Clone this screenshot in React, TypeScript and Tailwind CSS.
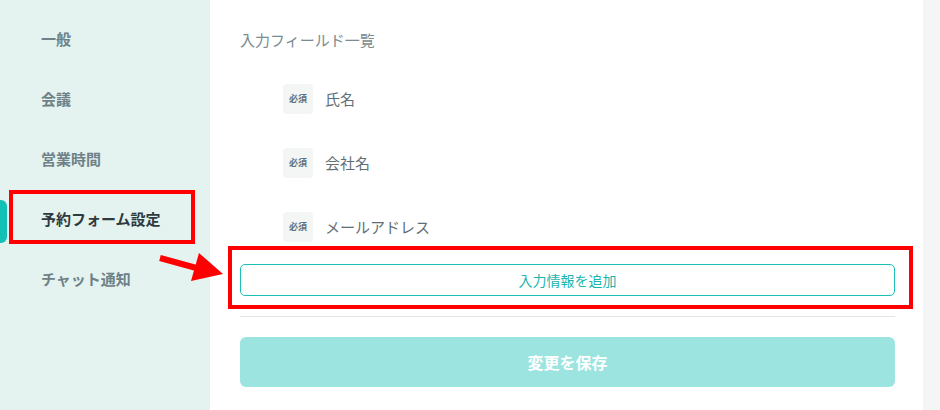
const navItems = ["一般", "会議", "営業時間", "予約フォーム設定", "チャット通知"];
const fields = ["氏名", "会社名", "メールアドレス"];

const App = () => {
  return (
    <div
      className="relative flex h-[410px] w-[940px] overflow-hidden bg-white"
      style={{ fontFamily: '"Noto Sans CJK JP", "Noto Sans", sans-serif' }}
    >
      {/* Sidebar */}
      <aside className="relative w-[210px] shrink-0 bg-[#e4f3ef] pt-[9px]">
        {navItems.map((item, i) => {
          const active = i === 3;
          return (
            <div key={item} className="relative flex h-[60px] items-center pl-[41px]">
              {active && (
                <div className="absolute left-0 top-[11px] h-[43px] w-[7px] rounded-r-md bg-[#12c0b6]" />
              )}
              <span
                className={
                  active
                    ? "text-[15px] font-bold text-[#2f3a3e]"
                    : "text-[15px] font-bold text-[#6e8188]"
                }
              >
                {item}
              </span>
            </div>
          );
        })}
      </aside>

      {/* Main */}
      <main className="flex-1 pl-[30px] pr-[28px] pt-[30px]">
        <div className="text-[15px] leading-5 text-[#7a8b91]">入力フィールド一覧</div>
        <div className="mt-[17px] flex flex-col">
          {fields.map((f) => (
            <div key={f} className="flex h-[64px] items-center pl-[43px]">
              <div className="flex h-[30px] w-[30px] items-center justify-center rounded bg-[#f4f6f6] text-[9px] font-bold text-[#5d717a]">
                必須
              </div>
              <span className="ml-[12px] text-[15px] text-[#5f6f75]">{f}</span>
            </div>
          ))}
        </div>
        <button className="mt-[5px] flex h-[32px] w-full items-center justify-center rounded-[5px] border border-[#1bc0b8] bg-white text-[14px] text-[#1bb5ae]">
          入力情報を追加
        </button>
        <div className="mt-[20px] border-t border-[#e3e5e5]" />
        <button className="mt-[20px] flex h-[50px] w-full items-center justify-center rounded-[6px] bg-[#9ce4e0] text-[16px] font-bold text-white">
          変更を保存
        </button>
      </main>

      {/* Right strip */}
      <div className="w-[17px] shrink-0 bg-[#f4f6f5]" />

      {/* Annotations */}
      <div className="pointer-events-none absolute left-[9px] top-[190px] h-[54px] w-[186px] border-4 border-[#ff0000]" />
      <div className="pointer-events-none absolute left-[228px] top-[246px] h-[63px] w-[685px] border-4 border-[#ff0000]" />
      <svg className="pointer-events-none absolute left-0 top-0" width="940" height="410">
        <line x1="160" y1="258" x2="200" y2="269" stroke="#ff0000" strokeWidth="6" />
        <polygon points="199,253 223,274 191,281" fill="#ff0000" />
      </svg>
    </div>
  );
};

export default App;
